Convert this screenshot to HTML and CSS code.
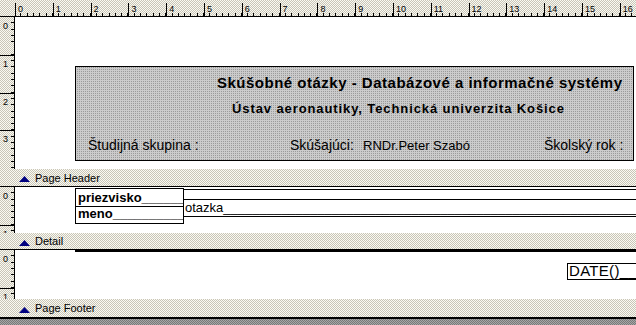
FILE: index.html
```html
<!DOCTYPE html>
<html>
<head>
  <title>Report Design</title>
  <link rel="stylesheet" href="styles.css">
</head>
<body>
  <div class="designer">
    <div class="hruler">
      <div class="hcorner"></div>
      <div class="hmark">0</div>
      <div class="hmark">1</div>
      <div class="hmark">2</div>
      <div class="hmark">3</div>
      <div class="hmark">4</div>
      <div class="hmark">5</div>
      <div class="hmark">6</div>
      <div class="hmark">7</div>
      <div class="hmark">8</div>
      <div class="hmark">9</div>
      <div class="hmark">10</div>
      <div class="hmark">11</div>
      <div class="hmark">12</div>
      <div class="hmark">13</div>
      <div class="hmark">14</div>
      <div class="hmark">15</div>
      <div class="hmark">16</div>
    </div>

    <!-- page header -->
    <div class="section sec-header">
      <div class="vruler">
        <div class="vmark">0</div>
        <div class="vmark">1</div>
        <div class="vmark">2</div>
        <div class="vmark">3</div>
      </div>
      <div class="canvas">
        <div class="titlebox">
          <div class="t1">Skúšobné otázky - Databázové a informačné systémy</div>
          <div class="t2">Ústav aeronautiky, Technická univerzita Košice</div>
          <div class="t3">
            <span class="f-group">Študijná skupina :</span>
            <span class="f-exam">Skúšajúci:</span>
            <span class="f-name">RNDr.Peter Szabó</span>
            <span class="f-year">Školský rok :</span>
          </div>
        </div>
      </div>
    </div>
    <div class="bar bar-header">
      <svg class="tri" width="11" height="6" viewBox="0 0 11 6"><polygon points="5.5,0 11,6 0,6" fill="#000080"/></svg>
      Page Header
    </div>

    <!-- detail -->
    <div class="section sec-detail">
      <div class="vruler">
        <div class="vmark">0</div>
        <div class="vmark">1</div>
      </div>
      <div class="canvas detail-row">
        <div class="pbox">
          <div class="prow prow-1">priezvisko______________</div>
          <div class="prow prow-2">meno______________</div>
        </div>
        <div class="otazka">
          <div class="oq-top"></div>
          <div class="oq-text">otazka________________________________________________________________________________</div>
        </div>
      </div>
    </div>
    <div class="bar bar-detail">
      <svg class="tri" width="11" height="6" viewBox="0 0 11 6"><polygon points="5.5,0 11,6 0,6" fill="#000080"/></svg>
      Detail
    </div>

    <!-- page footer -->
    <div class="section sec-footer">
      <div class="vruler">
        <div class="vmark">0</div>
        <div class="vmark">1</div>
      </div>
      <div class="canvas">
        <div class="fline"></div>
        <div class="datebox">DATE()______________</div>
      </div>
    </div>
    <div class="bar bar-footer">
      <svg class="tri" width="11" height="6" viewBox="0 0 11 6"><polygon points="5.5,0 11,6 0,6" fill="#000080"/></svg>
      Page Footer
    </div>
    <div class="backdrop"></div>
  </div>
</body>
</html>
```

FILE: styles.css
```css
body {
  margin: 0;
  width: 636px;
  height: 325px;
  overflow: hidden;
  background: #fff;
  font-family: "Liberation Sans", Arial, sans-serif;
  color: #000;
}

.designer {
  width: 636px;
}

/* rulers */
.hruler {
  display: flex;
  height: 16px;
  border-bottom: 1px solid #000;
  background:
    repeating-linear-gradient(to right, transparent 0 5.3px, #000 5.3px 6.3px) right bottom / calc(100% - 15px) 3px no-repeat,
    repeating-conic-gradient(#c8c5b8 0 25%, #fbfaf2 0 50%) 0 0 / 2px 2px;
  overflow: hidden;
}

.hcorner {
  flex: none;
  width: 15px;
}

.hmark {
  flex: none;
  width: 37.8px;
  height: 13px;
  margin-top: 3px;
  box-sizing: border-box;
  border-left: 1px solid #000;
  padding: 1px 0 0 2px;
  font-size: 9px;
  line-height: 10px;
}

.section {
  display: flex;
  overflow: hidden;
}

.sec-header { height: 152px; }
.sec-detail { height: 46px; }
.sec-footer { height: 49px; }

.vruler {
  flex: none;
  width: 14px;
  border-right: 1px solid #000;
  background:
    repeating-linear-gradient(to bottom, transparent 0 5.3px, #000 5.3px 6.3px) right top / 3px 100% no-repeat,
    repeating-conic-gradient(#c8c5b8 0 25%, #fbfaf2 0 50%) 0 0 / 2px 2px;
}

.vmark {
  height: 37.8px;
  box-sizing: border-box;
  border-top: 1px solid #000;
  padding: 3px 0 0 3px;
  font-size: 9px;
  line-height: 10px;
}

.vmark:first-child {
  border-top: none;
  padding-top: 4px;
}

.canvas {
  flex: 1;
  background: #fff;
}

/* section bars */
.bar {
  display: flex;
  align-items: center;
  padding-left: 19px;
  font-size: 11px;
  border-bottom: 1px solid #000;
  background: repeating-conic-gradient(#c8c5b8 0 25%, #fbfaf2 0 50%) 0 0 / 2px 2px;
}

.bar-header { height: 17px; }
.bar-detail { height: 16px; }
.bar-footer {
  height: 18px;
  border-bottom-width: 2px;
}

.tri {
  margin: 3px 5px 0 0;
}

.backdrop {
  height: 10px;
  background: repeating-conic-gradient(#787878 0 25%, #a6a6a6 0 50%) 0 0 / 2px 2px;
}

/* page header box */
.titlebox {
  width: 559px;
  height: 95px;
  margin: 49px 0 0 60px;
  box-sizing: border-box;
  border: 1px solid #000;
  background: repeating-conic-gradient(#9a9a9a 0 25%, #cbcbcb 0 100%) 0 0 / 2px 2px;
  white-space: nowrap;
}

.t1 {
  margin-top: 7px;
  padding-left: 141px;
  font-size: 15px;
  line-height: 18px;
  font-weight: bold;
  letter-spacing: 0.5px;
}

.t2 {
  margin-top: 9px;
  padding-left: 156px;
  font-size: 13px;
  line-height: 16px;
  font-weight: bold;
  letter-spacing: 0.9px;
}

.t3 {
  display: flex;
  align-items: baseline;
  margin-top: 20px;
  padding-left: 12px;
  font-size: 14px;
  line-height: 17px;
}

.f-group { width: 202px; flex: none; }
.f-exam { width: 73px; flex: none; }
.f-name { width: 181px; flex: none; font-size: 13px; }
.f-year { flex: none; }

/* detail */
.detail-row {
  display: flex;
  align-items: flex-start;
}

.pbox {
  flex: none;
  width: 109px;
  margin: 1px 0 0 60px;
  box-sizing: border-box;
  border: 1px solid #000;
  font-size: 13px;
  font-weight: bold;
  white-space: nowrap;
  overflow: hidden;
}

.prow {
  padding-left: 2px;
  overflow: hidden;
}

.prow-1 {
  line-height: 17px;
  border-bottom: 1px solid #000;
}

.prow-2 {
  line-height: 14px;
  padding-bottom: 2px;
}

.otazka {
  flex: 1;
  margin-top: 2px;
  overflow: hidden;
}

.oq-top {
  height: 9px;
  border-top: 1px solid #000;
  border-bottom: 1px solid #000;
}

.oq-text {
  padding-left: 1px;
  font-size: 13px;
  line-height: 16px;
  white-space: nowrap;
  overflow: hidden;
  border-bottom: 1px solid #000;
}

/* page footer */
.fline {
  height: 2px;
  margin-left: 60px;
  background: #000;
}

.datebox {
  width: 100px;
  height: 17px;
  margin: 11px 0 0 552px;
  box-sizing: border-box;
  border: 1px solid #000;
  padding-left: 1px;
  font-size: 15px;
  line-height: 13px;
  letter-spacing: 0.3px;
  white-space: nowrap;
  overflow: hidden;
}
```
